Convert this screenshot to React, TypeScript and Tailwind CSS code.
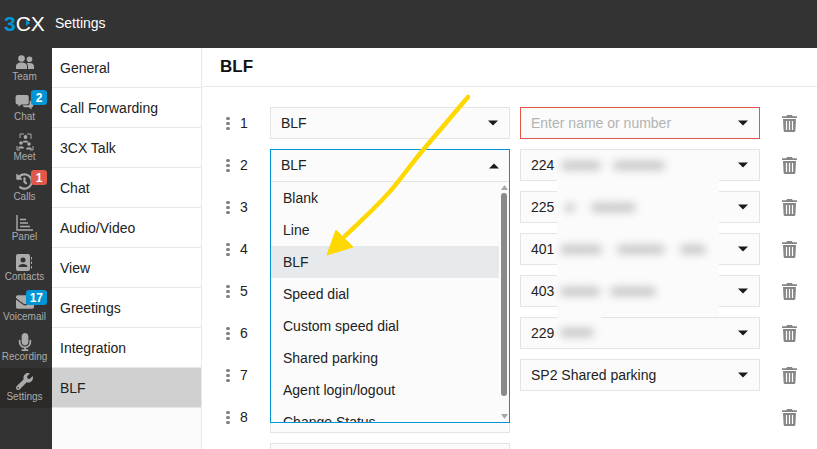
import React from "react";
import { FaEnvelope, FaMicrophone, FaWrench, FaHistory } from "react-icons/fa";

const G = "#ababab";

const Trash = () => (
  <svg width="15" height="17" viewBox="0 0 15 17" className="block">
    <path d="M5 0h5l0.6 1.200H15V3H0V1.200h4.400z" fill="#868686" />
    <path d="M1 4h13l-0.600 11.500a1.500 1.500 0 0 1-1.500 1.500H3.100a1.500 1.500 0 0 1-1.500-1.500z" fill="#868686" />
    <path d="M4.500 6v9M7.500 6v9M10.500 6v9" stroke="#fff" strokeWidth="1.200" />
  </svg>
);

const Caret = ({ up }: { up?: boolean }) => (
  <svg width="10" height="6" viewBox="0 0 10 6" className="block">
    <path d={up ? "M0 5.500L5 0.500L10 5.500Z" : "M0 0.500L10 0.500L5 5.500Z"} fill="#1a1a1a" />
  </svg>
);

const Grip = () => (
  <div className="flex flex-col gap-[2px]">
    <span className="w-[4px] h-[3px] rounded-full bg-[#808080]" />
    <span className="w-[4px] h-[3px] rounded-full bg-[#808080]" />
    <span className="w-[4px] h-[3px] rounded-full bg-[#808080]" />
  </div>
);

const Select = ({ text, placeholder, error }: { text?: string; placeholder?: boolean; error?: boolean }) => (
  <div className={`w-[240px] h-[32px] shrink-0 bg-[#fbfbfb] border flex items-center justify-between pl-[10px] pr-[11px] text-[14px] ${error ? "border-[#e2574c]" : "border-[#e4e4e4]"} ${placeholder ? "text-[#b3b3b3]" : "text-[#222]"}`}>
    <span>{text}</span>
    <Caret />
  </div>
);

const TeamIcon = () => (
  <svg width="18" height="15" viewBox="0 0 18 15" className="block">
    <circle cx="5.500" cy="3.500" r="3.300" fill={G} />
    <circle cx="13.500" cy="4.300" r="2.800" fill={G} />
    <path d="M0 14v-2.500C0 8.500 2.500 7.500 5.500 7.500S11 8.500 11 11.500V14z" fill={G} />
    <path d="M12 14v-2.500c0-1.300-.4-2.400-1.200-3.200C11.500 8 12.400 7.900 13.500 7.900c2.600 0 4.500 1 4.500 3.600V14z" fill={G} />
  </svg>
);

const ChatIcon = () => (
  <svg width="19" height="15" viewBox="0 0 19 16" className="block">
    <path d="M2 0h10a2 2 0 0 1 2 2v6a2 2 0 0 1-2 2H6l-3 2.500V10H2a2 2 0 0 1-2-2V2a2 2 0 0 1 2-2z" fill={G} />
    <path d="M15 6h2a2 2 0 0 1 2 2v3a2 2 0 0 1-2 2v2.500L14 13H9.500a2 2 0 0 1-1.800-2h5.300A2 2 0 0 0 15 9z" fill={G} />
  </svg>
);

const MeetIcon = () => (
  <svg width="18" height="18" viewBox="0 0 18 18" className="block">
    <path d="M4 5V1h4M11 1h4v5M1 13v4h3M17 13v4h-3" fill="none" stroke={G} strokeWidth="1" />
    <circle cx="9.500" cy="4" r="1.900" fill={G} />
    <path d="M6.500 9.500c0-2.800 6-2.800 6 0z" fill={G} />
    <circle cx="5" cy="10" r="1.800" fill={G} />
    <path d="M2 15.500c0-3 6-3 6 0z" fill={G} />
    <circle cx="13" cy="11" r="1.800" fill={G} />
    <path d="M10 16.500c0-3 6-3 6 0z" fill={G} />
  </svg>
);

const PanelIcon = () => (
  <svg width="17" height="16" viewBox="0 0 17 16" className="block">
    <path d="M1 0v15h16" fill="none" stroke={G} strokeWidth="1.400" />
    <path d="M4 4.500h6M4 8h8M4 11.500h10" stroke={G} strokeWidth="1.400" fill="none" />
  </svg>
);

const ContactsIcon = () => (
  <svg width="17" height="17" viewBox="0 0 17 17" className="block">
    <rect x="0" y="0" width="14" height="17" rx="2" fill={G} />
    <circle cx="7" cy="6" r="2.500" fill="#333" />
    <path d="M2.500 13c0-4 9-4 9 0z" fill="#333" />
    <path d="M15.500 3v2.500M15.500 7.500v2.500M15.500 12v2.500" stroke={G} strokeWidth="1" />
  </svg>
);

const rail: { label: string; icon: React.ReactNode; pad: string; badge?: string; red?: boolean; active?: boolean }[] = [
  { label: "Team", icon: <TeamIcon />, pad: "pt-[7px]" },
  { label: "Chat", icon: <ChatIcon />, pad: "pt-[7px]", badge: "2" },
  { label: "Meet", icon: <MeetIcon />, pad: "pt-[5px]" },
  { label: "Calls", icon: <FaHistory size={17} />, pad: "pt-[5px]", badge: "1", red: true },
  { label: "Panel", icon: <PanelIcon />, pad: "pt-[7px]" },
  { label: "Contacts", icon: <ContactsIcon />, pad: "pt-[6px]" },
  { label: "Voicemail", icon: <FaEnvelope size={18} />, pad: "pt-[5px]", badge: "17" },
  { label: "Recording", icon: <FaMicrophone size={18} />, pad: "pt-[5px]" },
  { label: "Settings", icon: <FaWrench size={17} />, pad: "pt-[5px]", active: true },
];

const nav = ["General", "Call Forwarding", "3CX Talk", "Chat", "Audio/Video", "View", "Greetings", "Integration", "BLF"];
const options = ["Blank", "Line", "BLF", "Speed dial", "Custom speed dial", "Shared parking", "Agent login/logout", "Change Status"];

const rows: { n: number; a?: string; b?: string; ph?: boolean; err?: boolean }[] = [
  { n: 1, a: "BLF", b: "Enter name or number", ph: true, err: true },
  { n: 2, b: "224" },
  { n: 3, b: "225" },
  { n: 4, b: "401" },
  { n: 5, b: "403" },
  { n: 6, b: "229" },
  { n: 7, b: "SP2 Shared parking" },
  { n: 8 },
];

const Blob = ({ w, top, left }: { w: number; top: number; left: number }) => (
  <div className="absolute h-[9px] rounded-full bg-[#c6c6c6] blur-[4px]" style={{ width: w, top, left }} />
);

export default function App() {
  return (
    <div className="w-[817px] h-[449px] overflow-hidden flex flex-col bg-white text-[#222] font-['Liberation_Sans',Arial,sans-serif]">
      <header className="h-[48px] shrink-0 bg-[#333333] flex items-center pl-[4px] pb-[1px] text-white">
        <div className="relative w-[42px] text-[21px] leading-none">
          <span className="text-[#0096d6] font-bold">3</span>CX
          <span className="absolute left-[22px] top-[7px] w-0 h-0 border-y-[3px] border-y-transparent border-l-[4px] border-l-[#0096d6]" />
        </div>
        <span className="ml-[9px] text-[14px]">Settings</span>
      </header>
      <div className="flex-1 flex min-h-0">
        <aside className="w-[52px] shrink-0 bg-[#333333] flex flex-col">
          {rail.map((r) => (
            <div key={r.label} className={`relative h-[40px] shrink-0 pr-[3px] flex flex-col items-center text-[#ababab] ${r.active ? "bg-[#2b2a29]" : ""}`}>
              <div className={`h-[23px] flex items-start justify-center ${r.pad}`}>{r.icon}</div>
              <div className="text-[10px] leading-[12px] whitespace-nowrap">{r.label}</div>
              {r.badge && (
                <span className={`absolute top-[2px] right-[5px] h-[15px] min-w-[16px] px-[4px] rounded-[3px] flex items-center justify-center text-white text-[12px] font-bold leading-none ${r.red ? "bg-[#e2574c]" : "bg-[#0096d6]"}`}>{r.badge}</span>
              )}
            </div>
          ))}
        </aside>
        <nav className="w-[150px] shrink-0 bg-[#fbfbfb] border-r border-[#e8e8e8] flex flex-col">
          {nav.map((n) => (
            <div key={n} className={`h-[40px] shrink-0 pl-[8px] pt-[1px] flex items-center text-[14px] border-b border-[#e8e8e8] ${n === "BLF" ? "bg-[#d0d0d0]" : "bg-white"}`}>{n}</div>
          ))}
        </nav>
        <main className="flex-1 min-w-0 flex flex-col">
          <div className="h-[39px] shrink-0 border-b border-[#e8e8e8] flex items-center pl-[18px] text-[17px] font-bold text-[#111]">BLF</div>
          <div className="relative flex-1 pt-[20px] pl-[24px] flex flex-col gap-[10px] overflow-hidden">
            {rows.map((r) => (
              <div key={r.n} className="flex items-center h-[32px] shrink-0">
                <div className="w-[10px]"><Grip /></div>
                <div className="w-[34px] pl-[4px] text-[14px]">{r.n}</div>
                <Select text={r.a} />
                <div className="w-[10px] shrink-0" />
                {r.b ? <Select text={r.b} placeholder={r.ph} error={r.err} /> : <div className="w-[240px] shrink-0" />}
                <div className="ml-[22px]"><Trash /></div>
              </div>
            ))}
            <div className="flex h-[32px] shrink-0 pl-[44px]">
              <div className="w-[240px] border border-[#e4e4e4] bg-[#fbfbfb]" />
            </div>

            <div className="absolute top-[63px] left-[355px] w-[162px] h-[167px] bg-[#fbfbfb]">
              <Blob w={40} top={11} left={4} />
              <Blob w={52} top={11} left={56} />
              <Blob w={10} top={53} left={8} />
              <Blob w={45} top={53} left={34} />
              <Blob w={42} top={95} left={3} />
              <Blob w={48} top={95} left={60} />
              <Blob w={26} top={95} left={123} />
              <Blob w={40} top={137} left={3} />
              <Blob w={46} top={137} left={53} />
            </div>
            <div className="absolute top-[230px] left-[355px] w-[44px] h-[30px] bg-[#fbfbfb]">
              <Blob w={34} top={11} left={3} />
            </div>

            <div className="absolute left-[68px] top-[62px] w-[240px] h-[274px] border border-[#0096d6] bg-[#fbfbfb] overflow-hidden">
              <div className="h-[32px] border-b border-[#e4e4e4] flex items-center justify-between pl-[10px] pr-[10px] text-[14px]">
                <span>BLF</span>
                <Caret up />
              </div>
              <div className="relative">
                {options.map((o) => (
                  <div key={o} className={`h-[32px] mr-[10px] pl-[12px] flex items-center text-[14px] ${o === "BLF" ? "bg-[#e6eaec]" : ""}`}>{o}</div>
                ))}
                <div className="absolute top-0 right-0 h-[240px] w-[10px] flex flex-col items-center">
                  <svg width="7" height="5" viewBox="0 0 7 5" className="mt-[3px] block"><path d="M0 5L3.500 0L7 5Z" fill="#a8a8a8" /></svg>
                  <div className="mt-[3px] w-[6px] h-[203px] rounded-[3px] bg-[#8a8a8a]" />
                  <svg width="7" height="5" viewBox="0 0 7 5" className="mt-[18px] block"><path d="M0 0L7 0L3.500 5Z" fill="#a8a8a8" /></svg>
                </div>
              </div>
            </div>

            <svg width="160" height="175" viewBox="0 0 160 175" className="absolute left-[115px] top-0">
              <path d="M151 10L106 63C96 75 88 86 80 96C68 112 50 128 28 149" fill="none" stroke="#ffd800" strokeWidth="4.500" strokeLinecap="round" />
              <path d="M10 168L19 143L36 160Z" fill="#ffd800" stroke="#ffd800" strokeLinejoin="round" />
            </svg>
          </div>
        </main>
      </div>
    </div>
  );
}
